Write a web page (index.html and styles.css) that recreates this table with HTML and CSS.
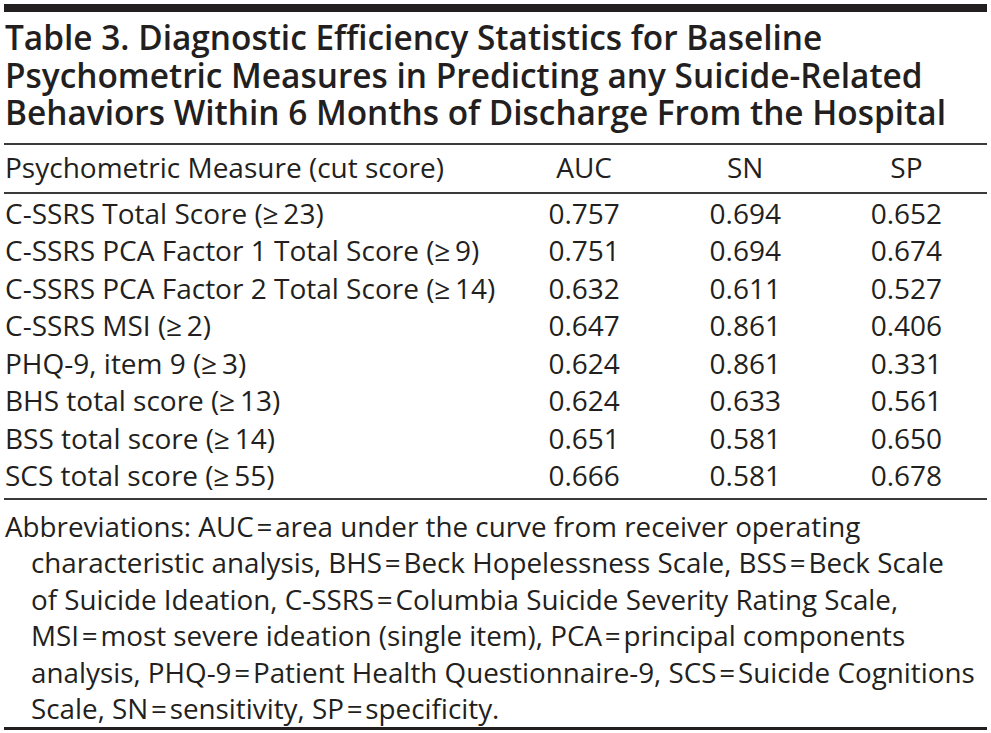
FILE: index.html
```html
<!DOCTYPE html>
<html lang="en">
<head>
<meta charset="utf-8">
<title>Table 3</title>
<link rel="stylesheet" href="styles.css">
</head>
<body>
<div class="page">
  <h1 class="title">Table 3. Diagnostic Efficiency Statistics for Baseline<br>Psychometric Measures in Predicting any Suicide-Related<br>Behaviors Within 6 Months of Discharge From the Hospital</h1>
  <table class="data">
    <thead>
      <tr>
        <th class="measure">Psychometric Measure (cut score)</th>
        <th class="num">AUC</th>
        <th class="num">SN</th>
        <th class="num">SP</th>
      </tr>
    </thead>
    <tbody>
      <tr><td class="measure">C-SSRS Total Score (≥&#8201;23)</td><td class="num">0.757</td><td class="num">0.694</td><td class="num">0.652</td></tr>
      <tr><td class="measure">C-SSRS PCA Factor 1 Total Score (≥&#8201;9)</td><td class="num">0.751</td><td class="num">0.694</td><td class="num">0.674</td></tr>
      <tr><td class="measure">C-SSRS PCA Factor 2 Total Score (≥&#8201;14)</td><td class="num">0.632</td><td class="num">0.611</td><td class="num">0.527</td></tr>
      <tr><td class="measure">C-SSRS MSI (≥&#8201;2)</td><td class="num">0.647</td><td class="num">0.861</td><td class="num">0.406</td></tr>
      <tr><td class="measure">PHQ-9, item 9 (≥&#8201;3)</td><td class="num">0.624</td><td class="num">0.861</td><td class="num">0.331</td></tr>
      <tr><td class="measure">BHS total score (≥&#8201;13)</td><td class="num">0.624</td><td class="num">0.633</td><td class="num">0.561</td></tr>
      <tr><td class="measure">BSS total score (≥&#8201;14)</td><td class="num">0.651</td><td class="num">0.581</td><td class="num">0.650</td></tr>
      <tr><td class="measure">SCS total score (≥&#8201;55)</td><td class="num">0.666</td><td class="num">0.581</td><td class="num">0.678</td></tr>
    </tbody>
  </table>
  <p class="note">Abbreviations: AUC&#8202;=&#8202;area under the curve from receiver operating<br>characteristic analysis, BHS&#8202;=&#8202;Beck Hopelessness Scale, BSS&#8202;=&#8202;Beck Scale<br>of Suicide Ideation, C-SSRS&#8202;=&#8202;Columbia Suicide Severity Rating Scale,<br>MSI&#8202;=&#8202;most severe ideation (single item), PCA&#8202;=&#8202;principal components<br>analysis, PHQ-9&#8202;=&#8202;Patient Health Questionnaire-9, SCS&#8202;=&#8202;Suicide Cognitions<br>Scale, SN&#8202;=&#8202;sensitivity, SP&#8202;=&#8202;specificity.</p>
</div>
</body>
</html>
```
FILE: styles.css
```css
html, body {
  margin: 0;
  padding: 0;
  background: #ffffff;
}

.page {
  width: 983px;
  margin: 4px 0 0 4px;
  color: #231f20;
  font-family: "Open Sans", "Liberation Sans", sans-serif;
  border-top: 8px solid #231f20;
}

.title {
  margin: 0;
  padding: 7px 0 11px 1px;
  font-size: 33.4px;
  font-weight: 600;
  line-height: 37.5px;
  letter-spacing: 0;
  white-space: nowrap;
  border-bottom: 2px solid #3a3a3a;
}

.data {
  width: 100%;
  border-collapse: collapse;
  font-size: 28px;
  line-height: 37.5px;
  border-bottom: 2px solid #3a3a3a;
}

.data th {
  font-weight: 400;
  height: 47px;
  padding: 0;
  border-bottom: 2px solid #3a3a3a;
}

.data td {
  height: 37.5px;
  padding: 0;
}

.data tbody tr:first-child td {
  padding-top: 1px;
}

.data tbody tr:last-child td {
  padding-bottom: 3px;
}

.measure {
  text-align: left;
  padding-left: 1px !important;
  width: 498px;
  white-space: nowrap;
}

.num {
  text-align: center;
  width: 161px;
}

.note {
  margin: 0;
  padding: 8px 0 0 27px;
  text-indent: -26px;
  font-size: 27.8px;
  line-height: 36.5px;
  white-space: nowrap;
  border-bottom: 3px solid #231f20;
}
```
